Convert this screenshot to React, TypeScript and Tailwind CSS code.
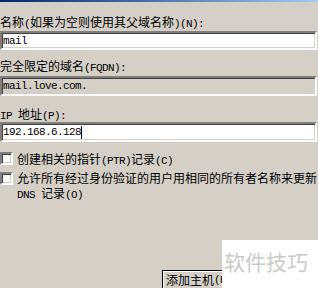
import React from "react";

// Latin runs in the dialog font are narrow monospace; CJK is full width
const Txt = ({ s }: { s: string }) => {
  const parts = s.split(/([\x00-\x7f]+)/);
  return (
    <>
      {parts.map((p, i) =>
        p === "" ? null : /^[\x00-\x7f]+$/.test(p) ? (
          <span
            key={i}
            className="font-['Liberation_Mono',monospace] text-[11px] tracking-[-0.6px] leading-[12px]"
          >
            {p}
          </span>
        ) : (
          <span key={i}>{p}</span>
        )
      )}
    </>
  );
};

const Field = ({
  value,
  readOnly,
  caret,
  tall = true,
  className,
}: {
  value: string;
  readOnly?: boolean;
  caret?: boolean;
  tall?: boolean;
  className?: string;
}) => (
  <div
    className={`w-[317px] ${tall ? "h-[20px]" : "h-[19px]"} border-2 border-t-[#808080] border-l-[#808080] border-b-white border-r-white shadow-[inset_1px_1px_0_#404040,inset_-1px_-1px_0_#d4d0c8] flex items-center pl-[1px] ${
      readOnly ? "bg-[#d4d0c8]" : "bg-white"
    } ${className ?? ""}`}
  >
    <span className="font-['Liberation_Mono',monospace] text-[11px] tracking-[-0.6px] leading-[12px]">
      {value}
    </span>
    {caret && <span className="w-px h-[13px] bg-black" />}
  </div>
);

const Check = () => (
  <div className="w-[13px] h-[13px] shrink-0 bg-white border-2 border-t-[#808080] border-l-[#808080] border-b-white border-r-white shadow-[inset_1px_1px_0_#404040,inset_-1px_-1px_0_#d4d0c8]" />
);

export default function App() {
  return (
    <div className="relative w-[318px] h-[288px] overflow-hidden bg-[#d4d0c8] text-black text-[12px] leading-[12px] font-['Noto_Sans_CJK_SC',sans-serif]">
      <div className="h-[2px] bg-gradient-to-r from-[#0a246a] to-[#a6caf0]" />

      <div className="mt-[14px] h-[12px] whitespace-nowrap">
        <Txt s="名称(如果为空则使用其父域名称)(N):" />
      </div>
      <Field className="mt-[3px]" tall={false} value="mail" />

      <div className="mt-[10px] h-[12px] whitespace-nowrap">
        <Txt s="完全限定的域名(FQDN):" />
      </div>
      <Field className="mt-[4px]" value="mail.love.com." readOnly />

      <div className="mt-[12px] h-[12px] whitespace-nowrap">
        <Txt s="IP 地址(P):" />
      </div>
      <Field className="mt-[2px]" value="192.168.6.128" caret />

      <div className="mt-[10px] h-[13px] flex items-start gap-[4px]">
        <Check />
        <div className="h-[13px] whitespace-nowrap pt-px">
          <Txt s="创建相关的指针(PTR)记录(C)" />
        </div>
      </div>

      <div className="mt-[7px] flex items-start gap-[4px]">
        <Check />
        <div className="whitespace-nowrap">
          <div className="h-[15px]">
            <Txt s="允许所有经过身份验证的用户用相同的所有者名称来更新" />
          </div>
          <div className="h-[15px]">
            <Txt s="DNS 记录(O)" />
          </div>
        </div>
      </div>

      <div className="mt-[68px] ml-[162px] w-[76px] h-[22px] border border-black bg-[#d4d0c8] shadow-[inset_1px_1px_0_#ffffff,inset_-1px_-1px_0_#404040,inset_-2px_-2px_0_#808080] flex items-start pt-[3px] pl-[3px] whitespace-nowrap">
        <Txt s="添加主机(H)" />
      </div>

      {/* watermark overlay */}
      <div className="absolute left-[222px] top-[240px] right-0 bottom-0 bg-white pl-[2px] pt-[9px]">
        <span className="text-[21px] leading-[24px] text-[#cacaca] whitespace-nowrap">软件技巧</span>
      </div>
    </div>
  );
}
